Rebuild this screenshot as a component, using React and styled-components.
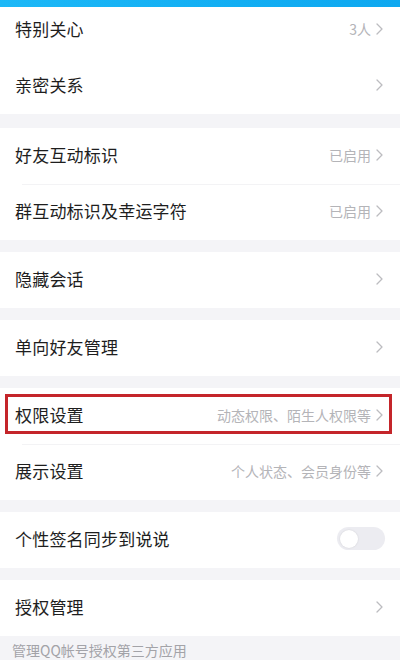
import React from "react";
import styled, { createGlobalStyle } from "styled-components";

const GlobalStyle = createGlobalStyle`
  html, body {
    margin: 0;
    padding: 0;
    background: #f4f4f7;
    font-family: "Noto Sans CJK SC", "Noto Sans", sans-serif;
  }
`;

const Page = styled.div`
  width: 400px;
  height: 660px;
  overflow: hidden;
  background: #f4f4f7;
  display: flex;
  flex-direction: column;
`;

const TopBar = styled.div`
  height: 7px;
  flex-shrink: 0;
  background: linear-gradient(90deg, #1cb8f7 0%, #12aef3 60%, #0ea8f0 100%);
`;

const Group = styled.div`
  background: #ffffff;
  margin-top: ${(p) => p.$gap || 0}px;
  display: flex;
  flex-direction: column;
`;

const Row = styled.div`
  position: relative;
  height: ${(p) => p.$height || 56}px;
  padding: 0 17px ${(p) => p.$padBottom ?? 3}px 15px;
  box-sizing: border-box;
  display: flex;
  align-items: center;
  justify-content: space-between;
  flex-shrink: 0;

  & + & {
    &::before {
      content: "";
      position: absolute;
      top: 0;
      left: 22px;
      right: 0;
      height: 1px;
      background: #f3f3f5;
    }
  }
`;

const Title = styled.span`
  font-size: 17px;
  color: #1e1e1e;
  letter-spacing: 0.2px;
`;

const Right = styled.div`
  display: flex;
  align-items: center;
  gap: 5px;
`;

const Value = styled.span`
  font-size: 14px;
  color: #b4b4b8;
`;

const Chevron = () => (
  <svg width="7" height="12" viewBox="0 0 7 12" fill="none">
    <path
      d="M1 1l5 5-5 5"
      stroke="#bcbcc0"
      strokeWidth="1.3"
      strokeLinecap="round"
      strokeLinejoin="round"
    />
  </svg>
);

const Highlight = styled.div`
  position: absolute;
  left: 5px;
  right: 8px;
  top: 6px;
  bottom: 10px;
  border: 3px solid #c4252a;
`;

const Track = styled.div`
  width: 48px;
  height: 23px;
  border-radius: 12px;
  background: #ececf1;
  display: flex;
  align-items: center;
  padding: 0 3px;
  box-sizing: border-box;
  margin-right: -2px;
`;

const Knob = styled.div`
  width: 18px;
  height: 18px;
  border-radius: 50%;
  background: #ffffff;
  box-shadow: 0 0 2px rgba(0, 0, 0, 0.12);
`;

const Footer = styled.div`
  padding: 5px 12px 0;
  font-size: 14px;
  line-height: 18px;
  color: #a3a3a8;
`;

const Item = ({ title, value, arrow = true, children, ...rest }) => (
  <Row {...rest}>
    <Title>{title}</Title>
    <Right>
      {value && <Value>{value}</Value>}
      {arrow && <Chevron />}
    </Right>
    {children}
  </Row>
);

const App = () => {
  return (
    <>
      <GlobalStyle />
      <Page>
        <TopBar />
        <Group>
          <Item title="特别关心" value="3人" $height={51} $padBottom={8} />
          <Item title="亲密关系" />
        </Group>
        <Group $gap={14}>
          <Item title="好友互动标识" value="已启用" />
          <Item title="群互动标识及幸运字符" value="已启用" />
        </Group>
        <Group $gap={12}>
          <Item title="隐藏会话" />
        </Group>
        <Group $gap={12}>
          <Item title="单向好友管理" />
        </Group>
        <Group $gap={12}>
          <Item title="权限设置" value="动态权限、陌生人权限等">
            <Highlight />
          </Item>
          <Item title="展示设置" value="个人状态、会员身份等" />
        </Group>
        <Group $gap={12}>
          <Row>
            <Title>个性签名同步到说说</Title>
            <Track>
              <Knob />
            </Track>
          </Row>
        </Group>
        <Group $gap={12}>
          <Item title="授权管理" />
        </Group>
        <Footer>管理QQ帐号授权第三方应用</Footer>
      </Page>
    </>
  );
};

export default App;
